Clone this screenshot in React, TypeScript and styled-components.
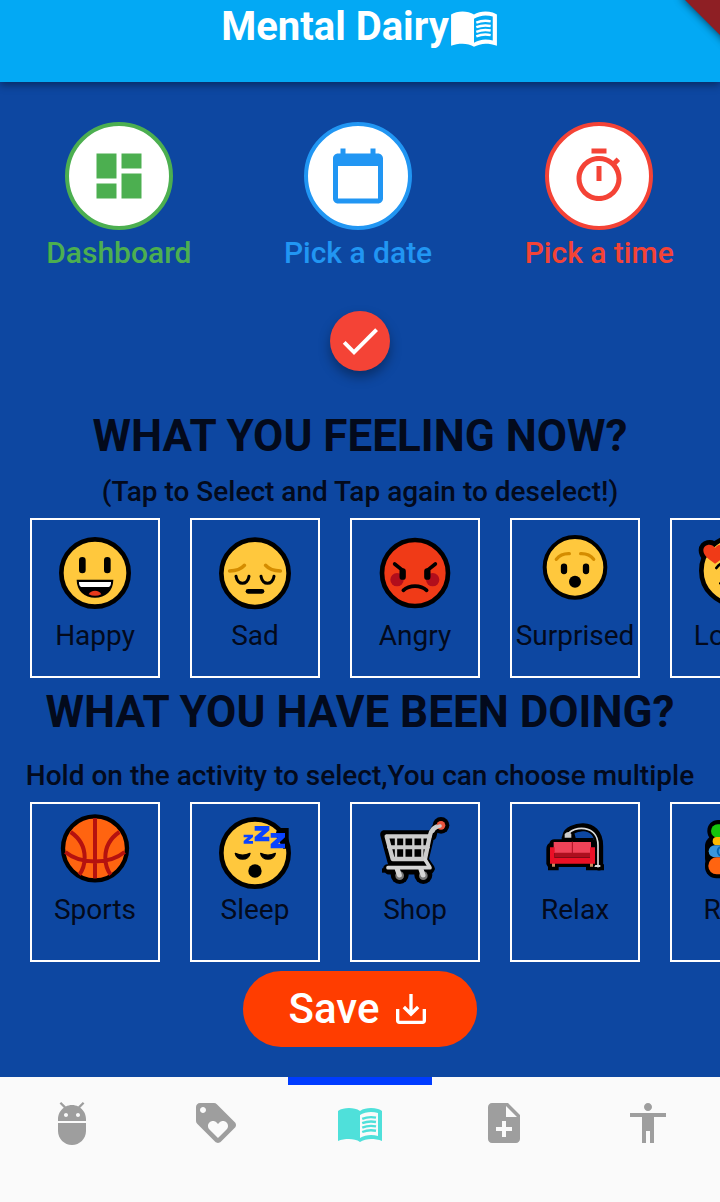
import React, { useState } from "react";
import styled, { createGlobalStyle } from "styled-components";

const GlobalStyle = createGlobalStyle`
  * { box-sizing: border-box; }
  body { margin: 0; background: #0d47a1; font-family: Roboto, "Liberation Sans", sans-serif; }
  button { font: inherit; border: 0; padding: 0; background: none; cursor: pointer; }
`;

const Page = styled.div`
  display: flex;
  flex-direction: column;
  min-height: 100vh;
  overflow: hidden;
  position: relative;
`;

const Header = styled.header`
  display: flex;
  justify-content: center;
  align-items: flex-start;
  height: 82px;
  background: #03a9f4;
  color: #fff;
  box-shadow: 0 3px 8px rgba(0, 0, 0, 0.4);
`;

const AppTitle = styled.h1`
  display: flex;
  align-items: center;
  margin: 0;
  font-size: 40px;
  line-height: 54px;
  font-weight: 700;
`;

const Ribbon = styled.svg`
  position: absolute;
  top: 0;
  right: 0;
  width: 60px;
  height: 60px;
`;

const Main = styled.main`
  flex: 1;
  display: flex;
  flex-direction: column;
  align-items: center;
  padding: 40px 0 30px;
`;

const Actions = styled.div`
  display: flex;
  justify-content: space-around;
  width: 100%;
`;

const Action = styled.button<{ $color: string }>`
  display: flex;
  flex-direction: column;
  align-items: center;
  gap: 5px;
  color: ${(p) => p.$color};
  font-size: 30px;
  line-height: 36px;
  font-weight: 500;
`;

const ActionCircle = styled.span`
  display: flex;
  align-items: center;
  justify-content: center;
  width: 108px;
  height: 108px;
  border: 4px solid currentColor;
  border-radius: 50%;
  background: #fff;
`;

const ConfirmButton = styled.button`
  display: flex;
  align-items: center;
  justify-content: center;
  width: 60px;
  height: 60px;
  margin-top: 40px;
  border-radius: 50%;
  background: #f44336;
  color: #fff;
  box-shadow: 0 6px 12px rgba(0, 0, 0, 0.35);
`;

const Section = styled.section<{ $top: number }>`
  width: 100%;
  margin-top: ${(p) => p.$top}px;
  text-align: center;
  color: #030a1c;
`;

const Question = styled.h2<{ $gap: number }>`
  margin: 0 0 ${(p) => p.$gap}px;
  font-size: 44px;
  line-height: 52px;
  font-weight: 700;
  white-space: nowrap;
`;

const Hint = styled.p`
  margin: 0;
  font-size: 28px;
  line-height: 32px;
  font-weight: 500;
  white-space: nowrap;
`;

const CardRow = styled.div`
  display: flex;
  gap: 30px;
  margin-top: 10px;
  padding: 0 30px;
  overflow-x: auto;
  scrollbar-width: none;
`;

const Card = styled.button`
  display: flex;
  flex: none;
  flex-direction: column;
  align-items: center;
  width: 130px;
  height: 160px;
  border: 2px solid #fff;
  color: #030a1c;
  font-size: 28px;
  line-height: 32px;
`;

const SaveButton = styled.button`
  display: flex;
  align-items: center;
  justify-content: center;
  gap: 12px;
  height: 76px;
  margin-top: 9px;
  padding: 0 46px;
  border-radius: 38px;
  background: #ff3d00;
  color: #fff;
  font-size: 42px;
  line-height: 48px;
  font-weight: 500;
`;

const BottomNav = styled.nav`
  display: flex;
  height: 126px;
  background: #fafafa;
`;

const NavItem = styled.button<{ $active: boolean }>`
  flex: 1;
  display: flex;
  justify-content: center;
  padding-top: 14px;
  border-top: 8px solid ${(p) => (p.$active ? "#003cff" : "transparent")};
  color: ${(p) => (p.$active ? "#4fe0da" : "#9e9e9e")};
`;

const paths = {
  book: "M23 6c-.6-.45-1.25-.75-2-1-1.11-.35-2.33-.5-3.5-.5-1.95 0-4.05.4-5.5 1.5-1.45-1.1-3.55-1.5-5.5-1.5S2.45 4.9 1 6v15c1.5-.7 3.6-1 5.5-1 1.95 0 4.05.4 5.5 1.5 1.35-.85 3.8-1.5 5.5-1.5 1.65 0 3.9.3 5.5 1zm-2 12.5c-1.1-.35-2.3-.5-3.5-.5-1.7 0-4.15.65-5.5 1.5V8c1.35-.85 3.8-1.5 5.5-1.5 1.2 0 2.4.15 3.5.5z",
  dashboard: "M3 13h8V3H3v10zm0 8h8v-6H3v6zm10 0h8V11h-8v10zm0-18v6h8V3h-8z",
  calendar:
    "M20 3h-1V1h-2v2H7V1H5v2H4c-1.1 0-2 .9-2 2v16c0 1.1.9 2 2 2h16c1.1 0 2-.9 2-2V5c0-1.1-.9-2-2-2zm0 18H4V8h16v13z",
  timer:
    "M15 1H9v2h6V1zm-4 13h2V8h-2v6zm8.03-6.61l1.42-1.42c-.43-.51-.9-.99-1.41-1.41l-1.42 1.42C16.07 4.74 14.12 4 12 4c-4.97 0-9 4.03-9 9s4.02 9 9 9 9-4.03 9-9c0-2.12-.74-4.07-1.97-5.61zM12 20c-3.87 0-7-3.13-7-7s3.13-7 7-7 7 3.13 7 7-3.13 7-7 7z",
  check: "M9 16.2L4.8 12l-1.4 1.4L9 19 21 7l-1.4-1.4L9 16.2z",
  save: "M19 12v7H5v-7H3v7c0 1.1.9 2 2 2h14c1.1 0 2-.9 2-2v-7h-2zm-6 .67l2.59-2.58L17 11.5l-5 5-5-5 1.41-1.41L11 12.67V3h2v9.67z",
  robot:
    "M5 16c0 3.87 3.13 7 7 7s7-3.13 7-7v-4H5v4zM16.12 4.37l2.1-2.1-.82-.83-2.3 2.31C14.16 3.28 13.12 3 12 3s-2.16.28-3.09.75L6.6 1.44l-.82.83 2.1 2.1C6.14 5.64 5 7.68 5 10v1h14v-1c0-2.32-1.14-4.36-2.88-5.63zM9 9c-.55 0-1-.45-1-1s.45-1 1-1 1 .45 1 1-.45 1-1 1zm6 0c-.55 0-1-.45-1-1s.45-1 1-1 1 .45 1 1-.45 1-1 1z",
  loyalty:
    "M21.41 11.58l-9-9C12.05 2.22 11.55 2 11 2H4c-1.1 0-2 .9-2 2v7c0 .55.22 1.05.59 1.42l9 9c.36.36.86.58 1.41.58.55 0 1.05-.22 1.41-.59l7-7c.37-.36.59-.86.59-1.41 0-.55-.23-1.06-.59-1.42zM5.5 7C4.67 7 4 6.33 4 5.5S4.67 4 5.5 4 7 4.67 7 5.5 6.33 7 5.5 7zm11.77 8.27L13 19.54l-4.27-4.27C8.28 14.81 8 14.19 8 13.5c0-1.38 1.12-2.5 2.5-2.5.69 0 1.32.28 1.77.74l.73.72.73-.73c.45-.45 1.08-.73 1.77-.73 1.38 0 2.5 1.12 2.5 2.5 0 .69-.28 1.32-.73 1.77z",
  noteAdd:
    "M14 2H6c-1.1 0-1.99.9-1.99 2L4 20c0 1.1.89 2 1.99 2H18c1.1 0 2-.9 2-2V8l-6-6zm2 14h-3v3h-2v-3H8v-2h3v-3h2v3h3v2zm-3-7V3.5L18.5 9H13z",
  person:
    "M12 2c1.1 0 2 .9 2 2s-.9 2-2 2-2-.9-2-2 .9-2 2-2zm9 7h-6v13h-2v-6h-2v6H9V9H3V7h18v2z",
};

type IconName = keyof typeof paths;

function Icon({ name, size }: { name: IconName; size: number }) {
  return (
    <svg width={size} height={size} viewBox="0 0 24 24" fill="currentColor" aria-hidden="true">
      <path d={paths[name]} fillRule="evenodd" />
      {name === "book" && (
        <path
          d="M13.1 9.9c2-.8 4.8-1 6.9-.6M13.1 12.1c2-.8 4.8-1 6.9-.6M13.1 14.3c2-.8 4.8-1 6.9-.6M13.1 16.5c2-.8 4.8-1 6.9-.6"
          fill="none"
          stroke="currentColor"
          strokeWidth="1.2"
        />
      )}
    </svg>
  );
}

/* Illustrations share a 378-unit wide canvas, three units to a pixel. */
function Art({ height, children }: { height: number; children: React.ReactNode }) {
  return (
    <svg
      width="126"
      height={height}
      viewBox={`0 0 378 ${height * 3}`}
      fill="none"
      strokeLinecap="round"
      strokeLinejoin="round"
      aria-hidden="true"
    >
      {children}
    </svg>
  );
}

const YELLOW = "#ffc83d";

const Happy = () => (
  <Art height={100}>
    <circle cx="189" cy="159" r="101" fill={YELLOW} stroke="#000" strokeWidth="14" />
    <path d="M151 121v29M226 121v29" stroke="#000" strokeWidth="20" />
    <path d="M134 179h110c0 34-24 54-55 54s-55-20-55-54z" fill="#000" />
    <path d="M141 186h96q0 14-7 15h-82q-7-1-7-15z" fill="#fff" />
    <path d="M170 223c6-14 32-14 38 0q-19 9-38 0z" fill="#e8391c" />
  </Art>
);

const Sad = () => (
  <Art height={100}>
    <circle cx="189" cy="160" r="101" fill={YELLOW} stroke="#000" strokeWidth="14" />
    <path d="M113 153q30-1 44-17M265 153q-30-1-44-17" stroke="#d48c00" strokeWidth="11" />
    <path d="M132 169c4 28 35 28 39 0M207 169c4 28 35 28 39 0" stroke="#000" strokeWidth="9" />
    <path d="M168 214h42" stroke="#000" strokeWidth="14" />
  </Art>
);

const Angry = () => (
  <Art height={100}>
    <circle cx="189" cy="159" r="99" fill="#f03a17" stroke="#000" strokeWidth="14" />
    <circle cx="135" cy="179" r="20" fill="#b10e1c" />
    <circle cx="242" cy="179" r="20" fill="#b10e1c" />
    <path d="M128 132l24 19M250 132l-24 19" stroke="#000" strokeWidth="11" />
    <path d="M152 154v16M226 154v16" stroke="#000" strokeWidth="19" />
    <path d="M154 211c18-17 52-17 70 0" stroke="#000" strokeWidth="11" />
  </Art>
);

const Surprised = () => (
  <Art height={100}>
    <circle cx="189" cy="142" r="91" fill={YELLOW} stroke="#000" strokeWidth="12" />
    <path d="M133 118q14-18 39-17M245 118q-14-18-39-17" stroke="#d48c00" strokeWidth="10" />
    <path d="M156 140v13M222 140v13" stroke="#000" strokeWidth="19" />
    <circle cx="189" cy="185" r="18" fill="#000" />
  </Art>
);

const heart = "M129 131c-18-12-35-24-35-40 0-18 25-24 35-7 10-17 35-11 35 7 0 16-17 28-35 40z";

const Loving = () => (
  <Art height={100}>
    <path d={heart} stroke="#000" strokeWidth="28" />
    <circle cx="189" cy="152" r="101" fill={YELLOW} stroke="#000" strokeWidth="14" />
    <path d="M133 144q18-26 36 0M209 144q18-26 36 0M145 190q44 36 88 0" stroke="#000" strokeWidth="8" />
    <path d={heart} fill="#f03a17" />
  </Art>
);

const Sports = () => (
  <Art height={90}>
    <circle cx="189" cy="133" r="96" fill="#ff6410" stroke="#000" strokeWidth="13" />
    <path
      d="M189 43v180M116 84c26 18 42 44 42 76 0 20-5 38-16 52M262 84c-26 18-42 44-42 76 0 20 5 38 16 52M100 144c46 38 132 38 178 0"
      stroke="#b5120f"
      strokeWidth="12"
      strokeLinecap="butt"
    />
  </Art>
);

const Sleep = () => (
  <Art height={90}>
    <circle cx="189" cy="147" r="101" fill={YELLOW} stroke="#000" strokeWidth="14" />
    <path d="M256 72h34v62h-16l-24-40z" fill="#000" />
    <path
      d="M155 92h28v7l-14 12h14v8h-28v-8l13-11h-13zM188 66h44v13l-22 19h22v14h-44v-13l22-19h-22zM236 87h43v13l-21 19h21v14h-43v-13l21-19h-21z"
      fill="#0a43ff"
    />
    <path d="M130 148q22 11 44 0c-3 23-41 23-44 0zM206 148q22 11 44 0c-3 23-41 23-44 0z" fill="#000" stroke="#000" strokeWidth="4" />
    <circle cx="189" cy="201" r="20" fill="#000" />
  </Art>
);

const cartShape =
  "M97 91h139l-20 83H119zM241 96c4-22 12-30 27-33M221 172l15 22-4 5H110l7-9h108M106 193h124";

const Shop = () => (
  <Art height={90}>
    <path d={cartShape} fill="#000" stroke="#000" strokeWidth="25" />
    <circle cx="267" cy="64" r="25" fill="#000" />
    <circle cx="143" cy="213" r="27" fill="#000" />
    <circle cx="214" cy="213" r="27" fill="#000" />
    <path d="M90 193h30v13H90z" fill="#000" />
    <circle cx="143" cy="215" r="13" fill="#777" />
    <circle cx="214" cy="215" r="13" fill="#777" />
    <path d="M136 196l6 17M207 196l6 17" stroke="#d5d5d5" strokeWidth="15" />
    <path d="M104 97h129l-14 68h-97z" stroke="#ccc" strokeWidth="13" />
    <path d="M112 130h115" stroke="#ccc" strokeWidth="12" />
    <path d="M132 102v60M157 102v60M184 102v60M211 102v60" stroke="#ccc" strokeWidth="7" />
    <path d="M233 97c5-20 12-29 34-33" stroke="#ccc" strokeWidth="13" />
    <circle cx="267" cy="64" r="13" fill="#e8553e" />
    <path d="M243 81c4-9 12-13 21-15" stroke="#ccc" strokeWidth="11" />
    <path d="M220 168l13 21M108 191h126" stroke="#d5d5d5" strokeWidth="11" />
  </Art>
);

const Relax = () => (
  <Art height={90}>
    <path d="M164 94c4-24 97-50 97 32v61" stroke="#000" strokeWidth="25" />
    <path d="M108 189l-5-9v-44q0-14 9-18 3-12 15-12h22v-6l8-14h30l4 16h54v6h4q14 0 14 22v59z" fill="#000" />
    <path d="M108 174h32v25h-32zM222 181h54v18h-54z" fill="#000" />
    <path d="M188 93c14-15 46-15 54 7h-30q-8-7-24-7z" fill="#0d47a1" />
    <path d="M167 92c16-27 91-32 91 32v64" stroke="#ddd" strokeWidth="5" />
    <path d="M158 90q11-12 20 0v11h-20z" fill="#ccc" />
    <path d="M250 183h15v6h-18z" fill="#ddd" />
    <path d="M120 177h9v11h-9zM234 177h9v11h-9z" fill="#c68b5d" />
    <path d="M125 114h112v33H125z" fill="#ef4358" />
    <path d="M181 114v32" stroke="#a90f20" strokeWidth="3" />
    <path d="M114 130h14v32h106v-32h15v49H114z" fill="#eb1026" />
    <path d="M129 146h105v15H129z" fill="#ad0f1e" />
  </Art>
);

const Read = () => (
  <Art height={90}>
    <g fill="#000">
      <rect x="106" y="48" width="180" height="66" rx="32" />
      <rect x="99" y="94" width="187" height="100" rx="32" />
      <rect x="99" y="148" width="190" height="75" rx="34" />
    </g>
    <rect x="117" y="61" width="160" height="40" rx="20" fill="#16c60c" />
    <rect x="122" y="99" width="150" height="25" rx="12" fill="#ffb900" />
    <rect x="110" y="124" width="166" height="36" rx="18" fill="#3a96dd" />
    <circle cx="151" cy="142" r="14" stroke="#0063b1" strokeWidth="6" />
    <rect x="109" y="160" width="168" height="51" rx="25" fill="#ff6410" />
  </Art>
);

const feelings = [
  { label: "Happy", Picture: Happy },
  { label: "Sad", Picture: Sad },
  { label: "Angry", Picture: Angry },
  { label: "Surprised", Picture: Surprised },
  { label: "Loving", Picture: Loving },
];

const activities = [
  { label: "Sports", Picture: Sports },
  { label: "Sleep", Picture: Sleep },
  { label: "Shop", Picture: Shop },
  { label: "Relax", Picture: Relax },
  { label: "Read", Picture: Read },
];

const actions: { label: string; icon: IconName; color: string }[] = [
  { label: "Dashboard", icon: "dashboard", color: "#4caf50" },
  { label: "Pick a date", icon: "calendar", color: "#2196f3" },
  { label: "Pick a time", icon: "timer", color: "#f44336" },
];

const tabs: { label: string; icon: IconName }[] = [
  { label: "Assistant", icon: "robot" },
  { label: "Favourites", icon: "loyalty" },
  { label: "Diary", icon: "book" },
  { label: "New note", icon: "noteAdd" },
  { label: "Profile", icon: "person" },
];

export default function App() {
  const [tab, setTab] = useState<IconName>("book");
  return (
    <Page>
      <GlobalStyle />
      <Header>
        <AppTitle>
          Mental Dairy
          <Icon name="book" size={50} />
        </AppTitle>
      </Header>
      <Ribbon viewBox="0 0 60 60" aria-hidden="true">
        <defs>
          <filter id="ribbonShadow" x="-50%" y="-50%" width="200%" height="200%">
            <feGaussianBlur stdDeviation="5" />
          </filter>
        </defs>
        <path d="M20-5h50v50z" fill="#000" opacity="0.7" filter="url(#ribbonShadow)" />
        <path d="M25 0h35v35z" fill="#8e1f24" />
      </Ribbon>
      <Main>
        <Actions>
          {actions.map((a) => (
            <Action key={a.label} $color={a.color}>
              <ActionCircle>
                <Icon name={a.icon} size={60} />
              </ActionCircle>
              {a.label}
            </Action>
          ))}
        </Actions>
        <ConfirmButton aria-label="Confirm">
          <Icon name="check" size={48} />
        </ConfirmButton>
        <Section $top={39}>
          <Question $gap={14}>WHAT YOU FEELING NOW?</Question>
          <Hint>(Tap to Select and Tap again to deselect!)</Hint>
          <CardRow>
            {feelings.map(({ label, Picture }) => (
              <Card key={label}>
                <Picture />
                {label}
              </Card>
            ))}
          </CardRow>
        </Section>
        <Section $top={8}>
          <Question $gap={22}>WHAT YOU HAVE BEEN DOING?</Question>
          <Hint>Hold on the activity to select,You can choose multiple</Hint>
          <CardRow>
            {activities.map(({ label, Picture }) => (
              <Card key={label}>
                <Picture />
                {label}
              </Card>
            ))}
          </CardRow>
        </Section>
        <SaveButton>
          Save
          <Icon name="save" size={40} />
        </SaveButton>
      </Main>
      <BottomNav>
        {tabs.map((t) => (
          <NavItem
            key={t.icon}
            $active={t.icon === tab}
            aria-label={t.label}
            onClick={() => setTab(t.icon)}
          >
            <Icon name={t.icon} size={48} />
          </NavItem>
        ))}
      </BottomNav>
    </Page>
  );
}
